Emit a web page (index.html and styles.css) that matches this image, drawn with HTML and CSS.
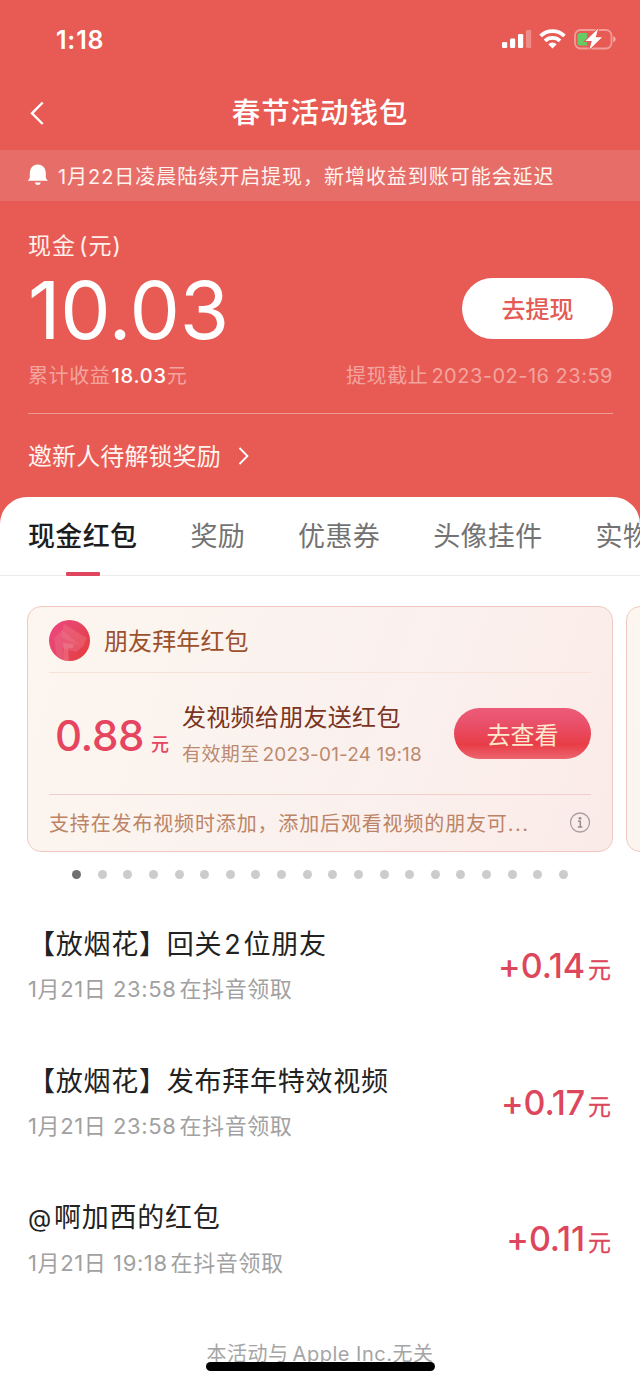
FILE: index.html
```html
<!DOCTYPE html>
<html lang="zh-CN">
<head>
<meta charset="utf-8">
<title>春节活动钱包</title>
<link rel="stylesheet" href="styles.css">
</head>
<body>
<div class="screen">
  <header class="hero">
    <div class="status">
      <span class="clock">1:18</span>
      <svg class="status-icons" width="116" height="24" viewBox="0 0 116 24">
        <g fill="#fff">
          <rect x="2" y="15" width="5.200" height="6" rx="1.300"/>
          <rect x="10" y="11.500" width="5.200" height="9.500" rx="1.300"/>
          <rect x="18" y="7" width="5.200" height="14" rx="1.300"/>
          <rect x="26" y="3" width="5.200" height="18" rx="1.300" opacity=".3"/>
        </g>
        <g fill="none" stroke="#fff" stroke-width="3.800">
          <path d="M40.600 9a17 17 0 0 1 23.800 0"/>
          <path d="M45 13.800a11 11 0 0 1 15 0"/>
        </g>
        <path d="M48.300 17.200a6 6 0 0 1 8.400 0l-4.200 4.200z" fill="#fff"/>
        <rect x="75" y="3" width="36.500" height="18.500" rx="5.500" fill="none" stroke="#fff" stroke-opacity=".4" stroke-width="1.800"/>
        <path d="M113.300 9v6.500q2.300-.8 2.300-3.200t-2.300-3.300z" fill="#fff" opacity=".5"/>
        <path d="M80 6h7v12.600h-7q-2.500 0-2.500-2.500v-7.600q0-2.500 2.500-2.500z" fill="#65cb66"/>
        <path d="M98.200 1.500 85.500 14h6.300L89.500 22.500 102 10.200h-6.300z" fill="#fff" stroke="#e85b54" stroke-width="2" paint-order="stroke"/>
      </svg>
    </div>
    <nav class="nav">
      <svg class="back" width="18" height="26" viewBox="0 0 18 26"><path d="M13.700 2.500 3 13.300 13.700 24" fill="none" stroke="#fff" stroke-width="2.400"/></svg>
      <h1 class="title">春节活动钱包</h1>
    </nav>
    <div class="notice">
      <svg width="22" height="24" viewBox="0 0 22 24" fill="#fff"><path d="M10.800 1.500a8 8 0 0 0-8 8v4.700q0 1.800-2.200 3.600h20.400q-2.200-1.800-2.200-3.600V9.500a8 8 0 0 0-8-8zM7.800 19.500h6q-.5 2.500-3 2.500t-3-2.500z"/></svg>
      <span>1月22日凌晨陆续开启提现，新增收益到账可能会延迟</span>
    </div>
    <section class="balance">
      <div class="balance-label">现金<span class="paren">(</span>元<span>)</span></div>
      <div class="balance-row"><span class="amount">10.03</span><button class="withdraw">去提现</button></div>
      <div class="meta"><span class="total">累计收益<b>18.03</b>元</span><span class="deadline">提现截止<span class="date">2023-02-16 23:59</span></span></div>
      <div class="invite"><span>邀新人待解锁奖励</span><svg width="12" height="20" viewBox="0 0 12 20"><path d="m1.500 2 8 8-8 8" fill="none" stroke="#fff" stroke-width="1.800"/></svg></div>
    </section>
  </header>
  <main class="panel">
    <div class="tabs">
      <span class="tab active">现金红包</span><span class="tab">奖励</span><span class="tab">优惠券</span><span class="tab">头像挂件</span><span class="tab">实物</span>
    </div>
    <div class="carousel">
      <article class="card">
        <div class="card-head">
          <svg width="41" height="41" viewBox="0 0 41 41">
            <defs><linearGradient id="coin" x1="0" y1="0" x2="1" y2=".7"><stop offset="0" stop-color="#ee4484"/><stop offset=".55" stop-color="#e64664"/><stop offset="1" stop-color="#e63d43"/></linearGradient><clipPath id="disc"><circle cx="20.500" cy="20.500" r="20.500"/></clipPath></defs>
            <g clip-path="url(#disc)"><path d="M0 0h41v41H0z" fill="url(#coin)"/>
            <path d="m15 4 23 14-4 9-22-10z" fill="#f28a91" opacity=".3"/>
            <path d="m5 18 8-8 20 17-6 5-14-4 5 13-10-3z" fill="#ef7b92" opacity=".36"/>
            <path d="m14 23 11 1-1 4h-5l1 13h-4z" fill="#f5a3a4" opacity=".3"/></g>
          </svg>
          <span>朋友拜年红包</span>
        </div>
        <div class="card-body">
          <div class="price">0.88<small>元</small></div>
          <div class="desc"><div class="desc-title">发视频给朋友送红包</div><div class="expiry">有效期至<span class="date">2023-01-24 19:18</span></div></div>
          <button class="view">去查看</button>
        </div>
        <div class="card-foot"><span>支持在发布视频时添加，添加后观看视频的朋友可<i>...</i></span>
          <svg width="22" height="22" viewBox="0 0 22 22"><circle cx="11" cy="10.500" r="9.500" fill="none" stroke="#aaa0a0" stroke-width="1.300"/><circle cx="11" cy="6.300" r="1.400" fill="#958d8d"/><path d="M9 9.300h2.300v5.500M8.800 15h4.600" fill="none" stroke="#958d8d" stroke-width="1.500"/></svg>
        </div>
      </article>
      <article class="card next"></article>
    </div>
    <div class="dots"><i class="on"></i><i></i><i></i><i></i><i></i><i></i><i></i><i></i><i></i><i></i><i></i><i></i><i></i><i></i><i></i><i></i><i></i><i></i><i></i><i></i></div>
    <ul class="records">
      <li><div><div class="rec-title">【放烟花】回关<span class="num">2</span>位朋友</div><div class="rec-sub">1月21日 23:58<span class="gap">在抖音领取</span></div></div><div class="gain">+0.14<small>元</small></div></li>
      <li><div><div class="rec-title">【放烟花】发布拜年特效视频</div><div class="rec-sub">1月21日 23:58<span class="gap">在抖音领取</span></div></div><div class="gain">+0.17<small>元</small></div></li>
      <li><div><div class="rec-title"><span class="at">@</span>啊加西的红包</div><div class="rec-sub">1月21日 19:18<span class="gap">在抖音领取</span></div></div><div class="gain">+0.11<small>元</small></div></li>
    </ul>
    <footer class="legal">本活动与<span class="latin">Apple Inc.</span>无关<div class="home-bar"></div></footer>
  </main>
</div>
</body>
</html>
```
FILE: styles.css
```css
* { box-sizing: border-box; }
body { margin: 0; font-family: Inter, "Noto Sans CJK SC", sans-serif; font-weight: 400; }
button { border: 0; padding: 0; font: inherit; }
svg { display: block; flex: none; }
i { font-style: normal; }
.screen { width: 640px; height: 1385px; overflow: hidden; background: #e85b54; white-space: nowrap; }
.hero { height: 497px; color: #fff; }
.status { height: 78px; display: flex; justify-content: space-between; padding: 27px 24px 0 56px; }
.clock { font-size: 25px; line-height: 27px; font-weight: 600; letter-spacing: .8px; }
.nav { height: 72px; display: grid; grid-template-columns: 84px 1fr 84px; align-items: center; padding: 0 0 2px; }
.back { margin-left: 29px; margin-top: -1px; }
.title { margin: 0; text-align: center; font-size: 28.500px; line-height: 40px; font-weight: 500; letter-spacing: .9px; }
.notice { height: 51px; display: flex; align-items: center; gap: 9px; padding: 0 0 1px 27px; background: #e76d69; color: #fff4ef; font-size: 20px; letter-spacing: .96px; }
.balance { padding: 29px 27px 0 28px; }
.balance-label { font-size: 23px; line-height: 32px; letter-spacing: 1px; color: #fff0eb; }
.paren { margin-left: 3px; }
.balance-row { height: 92px; display: flex; align-items: center; justify-content: space-between; }
.amount { font-size: 80px; line-height: 92px; letter-spacing: -.2px; padding-top: 3px; }
.withdraw { width: 151px; height: 61px; border-radius: 31px; background: #fff; color: #e45a54; font-size: 24px; font-weight: 500; padding-bottom: 2px; }
.meta { height: 60px; display: flex; justify-content: space-between; padding-top: 7px; border-bottom: 1px solid #f09993; color: #f3a49f; font-size: 20px; line-height: 30px; letter-spacing: .6px; }
.meta b { color: #fff; font-weight: 500; margin-left: 1px; letter-spacing: .8px; }
.deadline .date { margin-left: 3px; letter-spacing: .5px; }
.invite { height: 84px; display: flex; align-items: center; gap: 17px; font-size: 24px; letter-spacing: .1px; color: #fff4ef; }
.invite span { padding-bottom: 4px; }
.panel { height: 888px; border-radius: 27px 27px 0 0; background: #fff; overflow: hidden; }
.tabs { height: 79px; display: flex; gap: 53px; padding-left: 28px; border-bottom: 1px solid #ebebeb; color: #737373; font-size: 27px; line-height: 80px; letter-spacing: .35px; }
.active { color: #1d1d1f; font-weight: 500; display: flex; flex-direction: column; align-items: center; }
.active::after { content: ""; width: 34px; height: 4px; border-radius: 1px; background: #e0475f; margin-top: -5px; flex: none; }
.carousel { display: flex; gap: 13px; padding: 30px 0 0 27px; }
.card { width: 586px; height: 246px; flex: none; border: 1.500px solid #f0c8c1; border-radius: 14px; background: linear-gradient(110deg, #fdf6ef, #faf1ee 55%, #fbebe8); padding: 0 21px; }
.card-head { height: 66px; display: flex; align-items: center; gap: 14px; border-bottom: 1px solid #f8e1d9; color: #9b512c; font-size: 24px; letter-spacing: .1px; }
.card-head svg { margin-top: 1px; }
.card-body { height: 122px; display: flex; align-items: center; border-bottom: 1px solid #f3cfc9; }
.price { width: 133px; padding: 13px 0 0 6px; color: #e6455f; font-size: 42px; line-height: 50px; font-weight: 500; letter-spacing: -.4px; }
.price small { font-size: 18px; margin-left: 7px; }
.desc { padding-top: 3px; }
.desc-title { font-size: 24px; line-height: 34px; letter-spacing: .3px; color: #7b341d; }
.expiry { font-size: 19px; line-height: 28px; margin-top: 6px; letter-spacing: .4px; color: #bc8a70; }
.expiry .date { margin-left: 3px; letter-spacing: .15px; }
.view { width: 137px; height: 51px; margin-left: auto; border-radius: 26px; background: linear-gradient(#ed5b78, #e9506a 30%, #e83d47 72%, #ec6670); color: #ffe8ce; font-size: 24px; padding-bottom: 1px; }
.card-foot { height: 55px; display: flex; align-items: center; justify-content: space-between; color: #bc8467; font-size: 20px; letter-spacing: .85px; }
.card-foot i { letter-spacing: 1.500px; }
.dots { display: flex; justify-content: space-between; width: 496px; margin: 18px 0 0 72px; }
.dots i { width: 9px; height: 9px; border-radius: 50%; background: #ccc; }
.dots .on { background: #707070; }
.records { list-style: none; margin: 0; padding: 46px 29px 0 28px; }
.records li { height: 136.500px; display: flex; justify-content: space-between; }
.rec-title { font-size: 27px; line-height: 40px; letter-spacing: .75px; color: #222; }
.rec-sub { font-size: 22px; line-height: 32px; margin-top: 8px; letter-spacing: .6px; color: #a1a1a1; }
.num { margin: 0 2px; }
.at { font-size: 24px; margin-right: 2px; }
.gap { margin-left: 3px; }
.gain { color: #de465c; font-size: 34px; line-height: 82px; font-weight: 500; letter-spacing: -.1px; }
.gain small { font-size: 23px; font-weight: 400; margin-left: 3px; -webkit-text-stroke: .3px; }
.legal { position: relative; height: 60px; text-align: center; font-size: 20px; line-height: 30px; color: #a5a5a5; letter-spacing: .5px; margin-top: 4px; }
.latin { margin-left: 4px; }
.home-bar { position: absolute; left: 206px; top: 23px; width: 229px; height: 9px; border-radius: 5px; background: #000; }
```
